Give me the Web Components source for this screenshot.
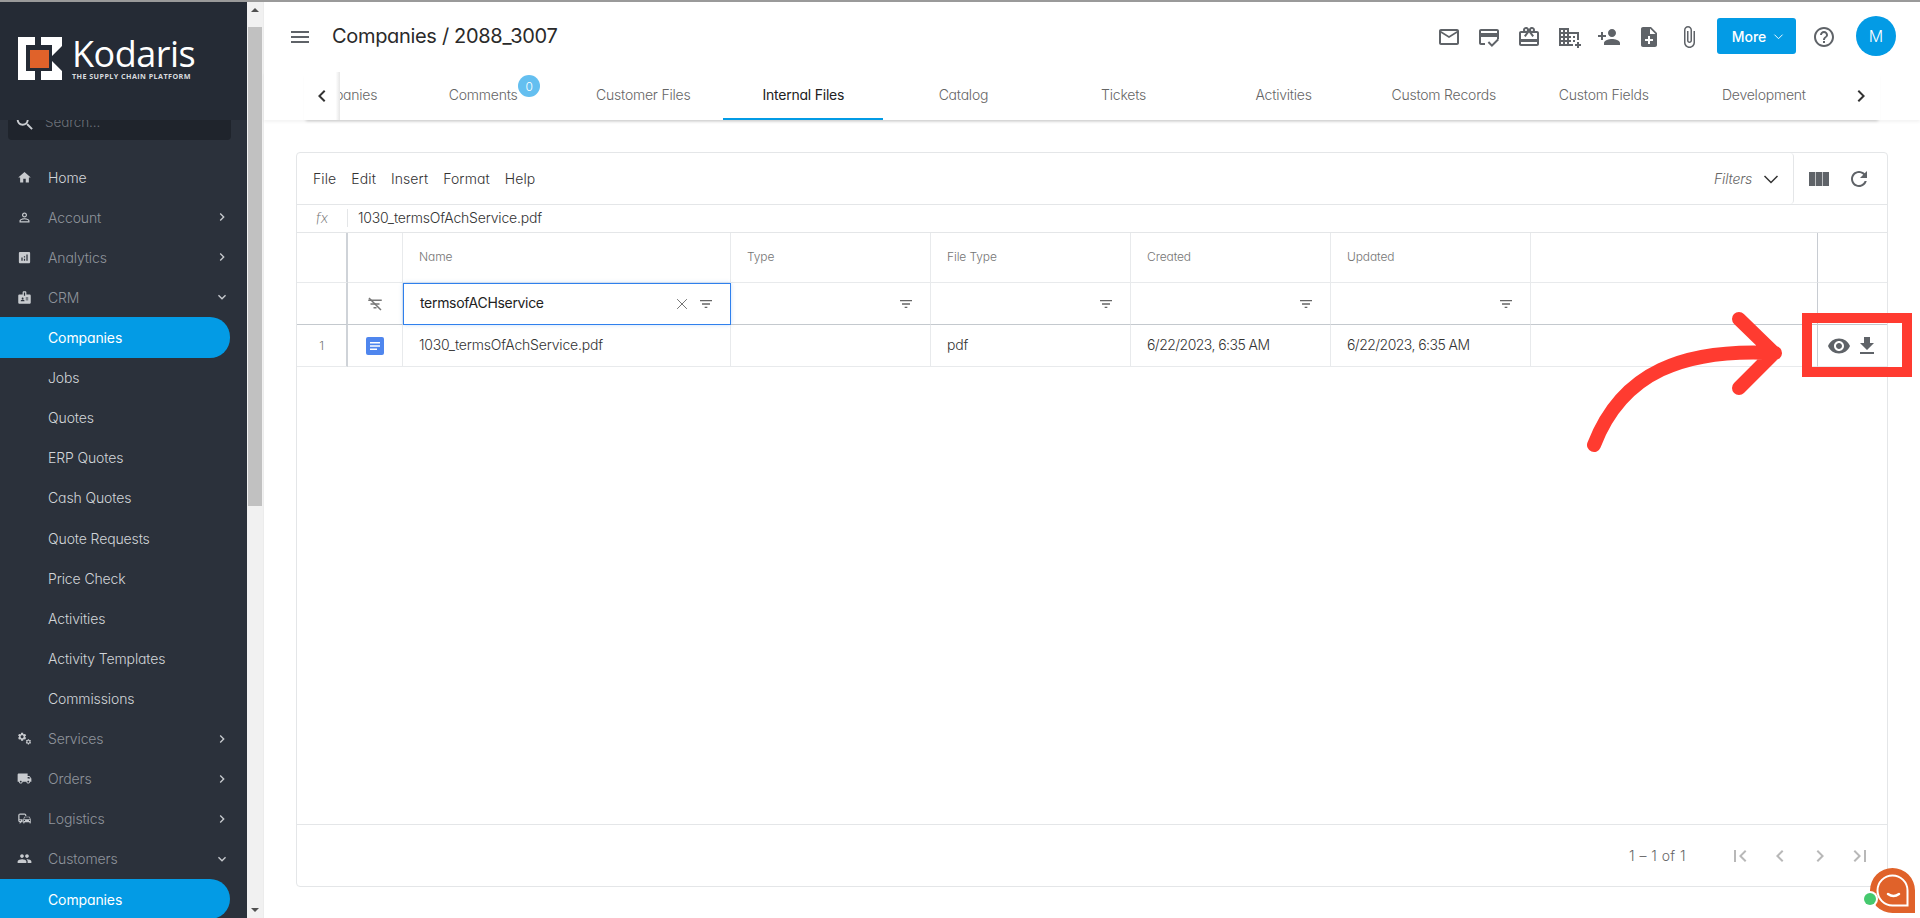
<!DOCTYPE html>
<html>
<head>
<meta charset="utf-8">
<title>Kodaris</title>
<style>
  html, body { margin: 0; height: 100%; overflow: hidden; }
  body { font-family: "Inter", "Lato", sans-serif; font-feature-settings: "cv11"; font-weight: 300; background: #fff; }
</style>
</head>
<body>
<kod-app>
  <kod-sidebar slot="sidebar">
    <kod-nav-item icon="home" bright>Home</kod-nav-item>
    <kod-nav-item icon="person" arrow="right">Account</kod-nav-item>
    <kod-nav-item icon="analytics" arrow="right">Analytics</kod-nav-item>
    <kod-nav-item icon="badge" arrow="down">CRM</kod-nav-item>
    <kod-nav-item active>Companies</kod-nav-item>
    <kod-nav-item child>Jobs</kod-nav-item>
    <kod-nav-item child>Quotes</kod-nav-item>
    <kod-nav-item child>ERP Quotes</kod-nav-item>
    <kod-nav-item child>Cash Quotes</kod-nav-item>
    <kod-nav-item child>Quote Requests</kod-nav-item>
    <kod-nav-item child>Price Check</kod-nav-item>
    <kod-nav-item child>Activities</kod-nav-item>
    <kod-nav-item child>Activity Templates</kod-nav-item>
    <kod-nav-item child>Commissions</kod-nav-item>
    <kod-nav-item icon="services" arrow="right">Services</kod-nav-item>
    <kod-nav-item icon="truck" arrow="right">Orders</kod-nav-item>
    <kod-nav-item icon="commute" arrow="right">Logistics</kod-nav-item>
    <kod-nav-item icon="people" arrow="down">Customers</kod-nav-item>
    <kod-nav-item active>Companies</kod-nav-item>
  </kod-sidebar>
  <kod-header slot="header"></kod-header>
  <kod-tabs slot="header"></kod-tabs>
  <kod-grid slot="content"></kod-grid>
</kod-app>
<kod-annotation></kod-annotation>
<kod-chat></kod-chat>

<script>
const ICONS = {
  menu: 'M3 18h18v-2H3v2zm0-5h18v-2H3v2zm0-7v2h18V6H3z',
  mail: 'M20 4H4c-1.1 0-1.99.9-1.99 2L2 18c0 1.1.9 2 2 2h16c1.1 0 2-.9 2-2V6c0-1.1-.9-2-2-2zm0 14H4V8l8 5 8-5v10zm-8-7L4 6h16l-8 5z',
  score: 'M20 4H4c-1.11 0-2 .89-2 2v12c0 1.11.89 2 2 2h4v-2H4v-6h16v2h2V6c0-1.1-.9-2-2-2zm0 4H4V6h16v2zm-5.07 11.17l-2.83-2.83-1.41 1.41L14.93 22 22 14.93l-1.41-1.41-5.66 5.65z',
  gift: 'M20 6h-2.18c.11-.31.18-.65.18-1 0-1.66-1.34-3-3-3-1.05 0-1.96.54-2.5 1.35l-.5.67-.5-.68C10.96 2.54 10.05 2 9 2 7.34 2 6 3.34 6 5c0 .35.07.69.18 1H4c-1.11 0-1.99.89-1.99 2L2 19c0 1.11.89 2 2 2h16c1.11 0 2-.89 2-2V8c0-1.11-.89-2-2-2zm-5-2c.55 0 1 .45 1 1s-.45 1-1 1-1-.45-1-1 .45-1 1-1zM9 4c.55 0 1 .45 1 1s-.45 1-1 1-1-.45-1-1 .45-1 1-1zm11 15H4v-2h16v2zm0-5H4V8h5.08L7 10.83 8.62 12 11 8.76l1-1.36 1 1.36L15.38 12 17 10.83 14.92 8H20v6z',
  domain: 'M12 7V3H2v18h14v-2h-4v-2h2v-2h-2v-2h2v-2h-2V9h8v6h2V7H12zM6 19H4v-2h2v2zm0-4H4v-2h2v2zm0-4H4V9h2v2zm0-4H4V5h2v2zm4 12H8v-2h2v2zm0-4H8v-2h2v2zm0-4H8V9h2v2zm0-4H8V5h2v2zm14 12v2h-2v2h-2v-2h-2v-2h2v-2h2v2h2zm-6-8h-2v2h2v-2zm0 4h-2v2h2v-2z',
  personadd: 'M15 12c2.21 0 4-1.79 4-4s-1.79-4-4-4-4 1.79-4 4 1.79 4 4 4zm-9-2V7H4v3H1v2h3v3h2v-3h3v-2H6zm9 4c-2.67 0-8 1.34-8 4v2h16v-2c0-2.66-5.33-4-8-4z',
  noteadd: 'M14 2H6c-1.1 0-1.99.9-1.99 2L4 20c0 1.1.89 2 1.99 2H18c1.1 0 2-.9 2-2V8l-6-6zm2 14h-3v3h-2v-3H8v-2h3v-3h2v3h3v2zm-3-7V3.5L18.5 9H13z',
  attach: 'M16.5 6v11.5c0 2.21-1.79 4-4 4s-4-1.79-4-4V5c0-1.38 1.12-2.5 2.5-2.5s2.5 1.12 2.5 2.5v10.5c0 .55-.45 1-1 1s-1-.45-1-1V6H10v9.5c0 1.38 1.12 2.5 2.5 2.5s2.5-1.12 2.5-2.5V5c0-2.21-1.79-4-4-4S7 2.79 7 5v12.5c0 3.04 2.46 5.5 5.5 5.5s5.5-2.46 5.5-5.5V6h-1.5z',
  help: 'M11 18h2v-2h-2v2zm1-16C6.48 2 2 6.48 2 12s4.48 10 10 10 10-4.48 10-10S17.52 2 12 2zm0 18c-4.41 0-8-3.59-8-8s3.59-8 8-8 8 3.59 8 8-3.59 8-8 8zm0-14c-2.21 0-4 1.79-4 4h2c0-1.1.9-2 2-2s2 .9 2 2c0 2-3 1.75-3 5h2c0-2.25 3-2.5 3-5 0-2.21-1.79-4-4-4z',
  columns: 'M2 5h6.3v14H2zM8.9 5h6.2v14H8.9zM15.7 5H22v14h-6.3z',
  refresh: 'M17.65 6.35C16.2 4.9 14.21 4 12 4c-4.42 0-7.99 3.58-7.99 8s3.57 8 7.99 8c3.73 0 6.84-2.55 7.73-6h-2.08c-.82 2.33-3.04 4-5.65 4-3.31 0-6-2.69-6-6s2.69-6 6-6c1.66 0 3.14.69 4.22 1.78L13 11h7V4l-2.35 2.35z',
  filter: 'M10 18h4v-2h-4v2zM3 6v2h18V6H3zm3 7h12v-2H6v2z',
  eye: 'M12 4.5C7 4.5 2.73 7.61 1 12c1.73 4.39 6 7.5 11 7.5s9.27-3.11 11-7.5c-1.73-4.39-6-7.5-11-7.5zM12 17c-2.76 0-5-2.24-5-5s2.24-5 5-5 5 2.24 5 5-2.24 5-5 5zm0-8c-1.66 0-3 1.34-3 3s1.34 3 3 3 3-1.34 3-3-1.34-3-3-3z',
  download: 'M19 9h-4V3H9v6H5l7 7 7-7zM5 18v2h14v-2H5z',
  first: 'M18.41 16.59L13.82 12l4.59-4.59L17 6l-6 6 6 6zM6 6h2v12H6z',
  left: 'M15.41 7.41L14 6l-6 6 6 6 1.41-1.41L10.83 12z',
  right: 'M10 6L8.59 7.41 13.17 12l-4.58 4.59L10 18l6-6z',
  last: 'M5.59 7.41L10.18 12l-4.59 4.59L7 18l6-6-6-6zM16 6h2v12h-2z',
  down: 'M16.59 8.59L12 13.17 7.41 8.59 6 10l6 6 6-6z',
  home: 'M10 20v-6h4v6h5v-8h3L12 3 2 12h3v8z',
  person: 'M12 5.9c1.16 0 2.1.94 2.1 2.1s-.94 2.1-2.1 2.1S9.9 9.16 9.9 8s.94-2.1 2.1-2.1m0 9c2.97 0 6.1 1.46 6.1 2.1v1.1H5.9V17c0-.64 3.13-2.1 6.1-2.1M12 4C9.79 4 8 5.79 8 8s1.79 4 4 4 4-1.79 4-4-1.79-4-4-4zm0 9c-2.67 0-8 1.34-8 4v3h16v-3c0-2.66-5.33-4-8-4z',
  analytics: 'M19 3H5c-1.1 0-2 .9-2 2v14c0 1.1.9 2 2 2h14c1.1 0 2-.9 2-2V5c0-1.1-.9-2-2-2zM9 17H7v-5h2v5zm4 0h-2v-3h2v3zm0-5h-2v-2h2v2zm4 5h-2V7h2v10z',
  badge: 'M20 7h-5V4c0-1.1-.9-2-2-2h-2c-1.1 0-2 .9-2 2v3H4c-1.1 0-2 .9-2 2v11c0 1.1.9 2 2 2h16c1.1 0 2-.9 2-2V9c0-1.1-.9-2-2-2zM9 12c.83 0 1.5.67 1.5 1.5S9.83 15 9 15s-1.5-.67-1.5-1.5S8.17 12 9 12zm3 6H6v-.75c0-1 2-1.5 3-1.5s3 .5 3 1.5V18zm1-9h-2V4h2v5zm5 7.5h-4V15h4v1.5zm0-3h-4V12h4v1.5z',
  truck: 'M20 8h-3V4H3c-1.1 0-2 .9-2 2v11h2c0 1.66 1.34 3 3 3s3-1.34 3-3h6c0 1.66 1.34 3 3 3s3-1.34 3-3h2v-5l-3-4zM6 18.5c-.83 0-1.5-.67-1.5-1.5s.67-1.5 1.5-1.5 1.5.67 1.5 1.5-.67 1.5-1.5 1.5zm13.5-9l1.96 2.5H17V9.5h2.5zm-1.5 9c-.83 0-1.5-.67-1.5-1.5s.67-1.5 1.5-1.5 1.5.67 1.5 1.5-.67 1.5-1.5 1.5z',
  commute: 'M12 4H5C3.34 4 2 5.34 2 7v8c0 1.66 1.34 3 3 3l-1 1v1h1l2-2.03L9 18v-5H4V5.98L13 6v2h2V7c0-1.66-1.34-3-3-3zM5 14c.55 0 1 .45 1 1s-.45 1-1 1-1-.45-1-1 .45-1 1-1zm15.57-4.34c-.14-.4-.52-.66-.97-.66h-7.19c-.46 0-.83.26-.98.66L10 13.77l.01 5.51c0 .38.31.72.69.72h.62c.38 0 .68-.38.68-.76V18h8v1.24c0 .38.31.76.69.76h.61c.38 0 .69-.34.69-.72l.01-1.37v-4.14l-1.43-4.11zm-8.16.34h7.19l1.03 3h-9.25l1.03-3zM12 16c-.55 0-1-.45-1-1s.45-1 1-1 1 .45 1 1-.45 1-1 1zm8 0c-.55 0-1-.45-1-1s.45-1 1-1 1 .45 1 1-.45 1-1 1z',
  people: 'M16 11c1.66 0 2.99-1.34 2.99-3S17.66 5 16 5c-1.66 0-3 1.34-3 3s1.34 3 3 3zm-8 0c1.66 0 2.99-1.34 2.99-3S9.66 5 8 5C6.34 5 5 6.34 5 8s1.34 3 3 3zm0 2c-2.33 0-7 1.17-7 3.5V19h14v-2.5c0-2.33-4.67-3.5-7-3.5zm8 0c-.29 0-.62.02-.97.05 1.16.84 1.97 1.97 1.97 3.45V19h6v-2.5c0-2.33-4.67-3.5-7-3.5z',
  search: 'M15.5 14h-.79l-.28-.27C15.41 12.59 16 11.11 16 9.5 16 5.91 13.09 3 9.5 3S3 5.91 3 9.5 5.91 16 9.5 16c1.61 0 3.09-.59 4.23-1.57l.27.28v.79l5 4.99L20.49 19l-4.99-5zm-6 0C7.01 14 5 11.99 5 9.5S7.01 5 9.5 5 14 7.01 14 9.5 11.99 14 9.5 14z'
};
const GEAR = 'M19.14 12.94c.04-.3.06-.61.06-.94 0-.32-.02-.64-.07-.94l2.03-1.58c.18-.14.23-.41.12-.61l-1.92-3.32c-.12-.22-.37-.29-.59-.22l-2.39.96c-.5-.38-1.03-.7-1.62-.94l-.36-2.54c-.04-.24-.24-.41-.48-.41h-3.84c-.24 0-.43.17-.47.41l-.36 2.54c-.59.24-1.13.57-1.62.94l-2.39-.96c-.22-.08-.47 0-.59.22L2.74 8.87c-.12.21-.08.47.12.61l2.03 1.58c-.05.3-.09.63-.09.94s.02.64.07.94l-2.03 1.58c-.18.14-.23.41-.12.61l1.92 3.32c.12.22.37.29.59.22l2.39-.96c.5.38 1.03.7 1.62.94l.36 2.54c.05.24.24.41.48.41h3.84c.24 0 .44-.17.47-.41l.36-2.54c.59-.24 1.13-.56 1.62-.94l2.39.96c.22.08.47 0 .59-.22l1.92-3.32c.12-.22.07-.47-.12-.61l-2.01-1.58zM12 15.6c-1.98 0-3.6-1.62-3.6-3.6s1.62-3.6 3.6-3.6 3.6 1.62 3.6 3.6-1.62 3.6-3.6 3.6z';

class KodIcon extends HTMLElement {
  connectedCallback() {
    const size = this.getAttribute('size') || 24;
    const name = this.getAttribute('name');
    let body = `<path d="${ICONS[name] || ''}"/>`;
    if (name === 'services') {
      body = `<g transform="translate(0 1) scale(.68)"><path d="${GEAR}"/></g><g transform="translate(13 12) scale(.44)"><path d="${GEAR}"/></g>`;
    }
    if (name === 'filteroff') {
      body = `<path d="${ICONS.filter}"/><path d="M4 4l16 16" stroke="currentColor" stroke-width="2"/>`;
    }
    if (name === 'clear') {
      body = `<path d="M5.5 5.5l13 13M18.5 5.5l-13 13" stroke="currentColor" stroke-width="1.2" fill="none"/>`;
    }
    if (name === 'chev') {
      body = `<path d="M5.5 9l6.5 6.5L18.5 9" stroke="currentColor" stroke-width="1.5" fill="none"/>`;
    }
    this.attachShadow({ mode: 'open' }).innerHTML = `
      <style>
        :host { display: inline-flex; flex: none; width: ${size}px; height: ${size}px; }
        svg { width: 100%; height: 100%; fill: currentColor; display: block; }
      </style>
      <svg viewBox="0 0 24 24">${body}</svg>`;
  }
}
customElements.define('kod-icon', KodIcon);

class KodApp extends HTMLElement {
  constructor() {
    super();
    this.attachShadow({ mode: 'open' }).innerHTML = `
      <style>
        :host { display: grid; grid-template-columns: 247px 17px 1fr; height: 918px; border-top: 2px solid #9a9a9a; box-sizing: border-box; overflow: hidden; }
        .scroll { background: #f1f1f1; display: flex; flex-direction: column; align-items: center; border-right: 1px solid #ececec; }
        .btn { height: 16px; flex: none; color: #505050; font-size: 0; display: flex; align-items: center; justify-content: center; }
        .up { width: 0; height: 0; border: 4px solid transparent; border-top: 0; border-bottom: 4px solid #505050; }
        .dn { width: 0; height: 0; border: 4px solid transparent; border-bottom: 0; border-top: 4px solid #505050; }
        .track { flex: 1; width: 100%; padding-top: 9px; }
        .thumb { height: 479px; background: #c1c1c1; margin: 0 1px; }
        main { display: flex; flex-direction: column; min-width: 0; }
        .content { padding: 32px 32px 0 32px; }
      </style>
      <slot name="sidebar"></slot>
      <div class="scroll">
        <div class="btn"><span class="up"></span></div>
        <div class="track"><div class="thumb"></div></div>
        <div class="btn"><span class="dn"></span></div>
      </div>
      <main>
        <slot name="header"></slot>
        <div class="content"><slot name="content"></slot></div>
      </main>`;
  }
}
customElements.define('kod-app', KodApp);

class KodSidebar extends HTMLElement {
  constructor() {
    super();
    this.attachShadow({ mode: 'open' }).innerHTML = `
      <style>
        :host { display: block; background: #2b313b; height: 916px; overflow: hidden; }
        .logo { height: 118px; background: #252b35; padding: 33px 0 0 18px; box-sizing: border-box; position: relative; z-index: 1; display: flex; gap: 10px; }
        .word { color: #fff; font-family: "Open Sans", sans-serif; font-feature-settings: normal; font-weight: 400; font-size: 36px; line-height: 37px; letter-spacing: -.5px; }
        .tag { color: #d8dbde; font-family: "Open Sans", sans-serif; font-feature-settings: normal; font-size: 7.2px; font-weight: 700; letter-spacing: .42px; line-height: 8px; white-space: nowrap; }
        .search { height: 30px; margin: -10px 16px 17px 8px; background: #1f242c; border-radius: 4px; display: flex; align-items: center; gap: 9px; padding: 0 0 7px 6px; box-sizing: border-box; color: #6d727a; font-size: 13.5px; letter-spacing: -.1px; }
        .search kod-icon { color: #c9ccd0; }
      </style>
      <div class="logo">
        <svg width="44" height="44" viewBox="0 0 44 44" style="margin-top:2px">
          <path fill="#fff" d="M0 0h17v8H8v26h9v9H0z"/>
          <path fill="#fff" d="M23 0h21v9L34 19V8H23zM23 43h21v-9L34 24v10H23z"/>
          <rect x="12" y="13" width="19" height="18" fill="#e0622a"/>
        </svg>
        <div>
          <div class="word">Kodaris</div>
          <div class="tag">THE SUPPLY CHAIN PLATFORM</div>
        </div>
      </div>
      <div class="search"><kod-icon name="search" size="22"></kod-icon><span>Search...</span></div>
      <slot></slot>`;
  }
}
customElements.define('kod-sidebar', KodSidebar);

class KodNavItem extends HTMLElement {
  connectedCallback() {
    const icon = this.getAttribute('icon');
    const arrow = this.getAttribute('arrow');
    this.attachShadow({ mode: 'open' }).innerHTML = `
      <style>
        :host { display: flex; align-items: center; height: 40.12px; padding-left: 17px; font-size: 14px; letter-spacing: -.12px; color: #8f949c; box-sizing: border-box; width: 230px; position: relative; }
        :host([bright]) { color: #d2d5d9; }
        :host([child]) { color: #d2d5d9; }
        :host([active]) { color: #fff; background: #039be5; border-radius: 0 20px 20px 0; font-weight: 400; }
        .ico { width: 15px; height: 15px; margin-right: 16px; color: #c8cbcf; flex: none; }
        .ico kod-icon { display: block; }
        .text { flex: 1; }
        :host([child]) .ico, :host([active]) .ico { visibility: hidden; }
        .arrow { color: #c8cbcf; margin-right: 0; display: flex; }
      </style>
      <span class="ico">${icon ? `<kod-icon name="${icon}" size="15"></kod-icon>` : ''}</span>
      <span class="text"><slot></slot></span>
      ${arrow ? `<span class="arrow"><kod-icon name="${arrow}" size="16"></kod-icon></span>` : ''}`;
  }
}
customElements.define('kod-nav-item', KodNavItem);

class KodHeader extends HTMLElement {
  constructor() {
    super();
    const iconNames = ['mail', 'score', 'gift', 'domain', 'personadd', 'noteadd', 'attach'];
    this.attachShadow({ mode: 'open' }).innerHTML = `
      <style>
        :host { display: flex; align-items: center; height: 70px; padding: 0 24px 0 24px; color: #5f6368; }
        h1 { font-size: 20px; font-weight: 400; letter-spacing: -.32px; color: #2a2a2a; margin: 0 0 2px 20px; flex: 1; }
        .tools { display: flex; gap: 16px; margin-right: 16px; }
        button { font: inherit; border: 0; background: #039be5; color: #fff; width: 79px; height: 36px; margin-bottom: 2px; border-radius: 3px; font-size: 14px; font-weight: 500; display: flex; align-items: center; justify-content: center; gap: 5px; padding: 0 0 0 5px; }
        .help { margin: 0 20px 0 16px; }
        .avatar { width: 40px; height: 40px; margin-bottom: 2px; border-radius: 50%; background: #039be5; color: #fff; display: flex; align-items: center; justify-content: center; font-size: 16px; }
      </style>
      <kod-icon name="menu" size="24"></kod-icon>
      <h1>Companies / 2088_3007</h1>
      <div class="tools">${iconNames.map(n => `<kod-icon name="${n}" size="24"></kod-icon>`).join('')}</div>
      <button>More <kod-icon name="chev" size="15"></kod-icon></button>
      <kod-icon class="help" name="help" size="24"></kod-icon>
      <div class="avatar">M</div>`;
  }
}
customElements.define('kod-header', KodHeader);

class KodTabs extends HTMLElement {
  constructor() {
    super();
    const tabs = ['Companies', 'Comments', 'Customer Files', 'Internal Files', 'Catalog', 'Tickets', 'Activities', 'Custom Records', 'Custom Fields', 'Development'];
    this.attachShadow({ mode: 'open' }).innerHTML = `
      <style>
        :host { display: block; height: 48px; padding: 0 40px; color: #666; box-shadow: 0 2px 3px rgba(0,0,0,.05); position: relative; font-size: 14px; letter-spacing: -.22px; background: #fff; }
        .wrap { display: flex; height: 100%; box-shadow: 0 3px 3px -2px rgba(0,0,0,.2); }
        .side { flex: none; display: flex; align-items: center; justify-content: center; color: #333; padding-bottom: 1px; box-sizing: border-box; }
        .side.l { width: 36px; background: linear-gradient(90deg, #fff 88%, #e6e6e6 100%); position: relative; z-index: 1; }
        .strip { flex: 1; overflow: hidden; display: flex; min-width: 0; }
        .side.r { width: 40px; padding-left: 2px; }
        .inner { display: flex; margin-left: -97px; flex: none; }
        .tab { width: 160.1px; flex: none; display: flex; align-items: center; justify-content: center; box-sizing: border-box; border-bottom: 2px solid transparent; padding-bottom: 2px; position: relative; }
        .tab.first { padding-left: 36px; }
        .tab.on { color: #222; border-bottom-color: #039be5; font-weight: 400; }
        .badge { position: absolute; top: 3px; left: 115px; width: 22px; height: 22px; border-radius: 50%; background: #64bff0; color: #fff; font-size: 12px; display: flex; align-items: center; justify-content: center; }
      </style>
      <div class="wrap">
        <div class="side l"><kod-icon name="left" size="24"></kod-icon></div>
        <div class="strip"><div class="inner">
          ${tabs.map((t, i) => `<div class="tab${t === 'Internal Files' ? ' on' : ''}${i === 0 ? ' first' : ''}">${t}${t === 'Comments' ? '<span class="badge">0</span>' : ''}</div>`).join('')}
        </div></div>
        <div class="side r"><kod-icon name="right" size="24"></kod-icon></div>
      </div>`;
  }
}
customElements.define('kod-tabs', KodTabs);

class KodGrid extends HTMLElement {
  constructor() {
    super();
    const cols = ['Name', 'Type', 'File Type', 'Created', 'Updated'];
    const filterCell = (extra) => `<div class="c f ${extra || ''}">${extra ? '<span class="val">termsofACHservice</span><kod-icon class="x" name="clear" size="18"></kod-icon>' : ''}<kod-icon class="fi" name="filter" size="16"></kod-icon></div>`;
    this.attachShadow({ mode: 'open' }).innerHTML = `
      <style>
        :host { display: flex; flex-direction: column; height: 735px; border: 1px solid #e4e6e8; border-radius: 4px; box-sizing: border-box; font-size: 14px; letter-spacing: -.2px; color: #333; }
        .bar { height: 52px; display: flex; align-items: center; border-bottom: 1px solid #e4e6e8; flex: none; box-sizing: border-box; }
        .menu { display: flex; gap: 15px; padding-left: 16px; flex: 1; letter-spacing: .1px; }
        .fbox { display: flex; align-items: center; height: 100%; padding-right: 10px; border-right: 1px solid #e4e6e8; border-radius: 0 4px 4px 0; color: #666; font-style: italic; gap: 7px; }
        .fbox kod-icon { color: #333; }
        .rt { display: flex; gap: 16px; padding: 0 16px 0 13px; color: #5f6368; align-items: center; }
        .fx { height: 28px; flex: none; display: flex; align-items: center; border-bottom: 1px solid #e4e6e8; box-sizing: border-box; padding-bottom: 1px; }
        .fx i { width: 50px; text-align: center; color: #777; box-sizing: border-box; font-family: "Lato", sans-serif; font-size: 16px; letter-spacing: 0; margin-bottom: 3px; }
        .fx span { border-left: 1px solid #e4e6e8; padding-left: 10px; line-height: 18px; }
        .table { display: grid; grid-template-columns: 51px 55px 328px 200px 200px 200px 200px 287px 1fr; grid-template-rows: 50px 42px 42px; flex: none; }
        .c { display: flex; align-items: center; padding-left: 16px; border-right: 1px solid #e8eaec; border-bottom: 1px solid #e8eaec; box-sizing: border-box; min-width: 0; padding-bottom: 2px; }
        .h { color: #757575; font-size: 12px; letter-spacing: -.1px; padding-bottom: 2px; }
        .date { letter-spacing: -.55px; }
        .n { justify-content: center; padding: 0; color: #777; font-size: 12px; border-right: 2px solid #cfd3d8; }
        .i { justify-content: center; padding: 0; color: #777; }
        .f { justify-content: flex-end; padding: 0 16px 0 0; border-bottom-color: #c4c9ce; color: #777; }
        .fn { border-bottom-color: #c4c9ce; }
        .name { border: 1px solid #2f80ed; padding-left: 16px; justify-content: flex-start; color: #222; box-shadow: 0 0 4px rgba(47,128,237,.25); }
        .val { flex: 1; font-weight: 400; letter-spacing: -.32px; margin-bottom: 3px; }
        .fi { color: #666; }
        .x { color: #666; margin-right: 7px; }
        .blankr { border-right: 1px solid #c8ccd2; }
        .act { border-right: 0; padding: 0 0 0 9px; gap: 4px; color: #5f6368; }
        .g { flex: 1; }
        .foot { height: 62px; flex: none; border-top: 1px solid #e4e6e8; display: flex; align-items: center; justify-content: flex-end; padding: 0 15px 0 0; color: #666; font-size: 14px; letter-spacing: .45px; box-sizing: border-box; }
        .foot span { margin-right: 42px; }
        .pg { display: flex; gap: 16px; color: #b8b8b8; }
      </style>
      <div class="bar">
        <div class="menu"><span>File</span><span>Edit</span><span>Insert</span><span>Format</span><span>Help</span></div>
        <div class="fbox">Filters <kod-icon name="chev" size="24"></kod-icon></div>
        <div class="rt"><kod-icon name="columns" size="24"></kod-icon><kod-icon name="refresh" size="24"></kod-icon></div>
      </div>
      <div class="fx"><i>fx</i><span>1030_termsOfAchService.pdf</span></div>
      <div class="table">
        <div class="c n"></div><div class="c i"></div>
        ${cols.map(c => `<div class="c h">${c}</div>`).join('')}
        <div class="c blankr"></div><div class="c" style="border-right:0"></div>

        <div class="c n fn"></div>
        <div class="c i fn"><kod-icon name="filteroff" size="18"></kod-icon></div>
        ${filterCell('name')}
        ${filterCell()}${filterCell()}${filterCell()}${filterCell()}
        <div class="c fn blankr"></div><div class="c fn" style="border-right:0"></div>

        <div class="c n">1</div>
        <div class="c i">
          <svg width="18" height="18" viewBox="0 0 18 18"><rect width="18" height="18" rx="2" fill="#4f86ee"/><path d="M4 5h10v1.6H4zM4 8.2h10v1.6H4zM4 11.4h7V13H4z" fill="#fff"/></svg>
        </div>
        <div class="c">1030_termsOfAchService.pdf</div>
        <div class="c"></div>
        <div class="c">pdf</div>
        <div class="c date">6/22/2023, 6:35 AM</div>
        <div class="c date">6/22/2023, 6:35 AM</div>
        <div class="c blankr"></div>
        <div class="c act"><kod-icon name="eye" size="24"></kod-icon><kod-icon name="download" size="24"></kod-icon></div>
      </div>
      <div class="g"></div>
      <div class="foot"><span>1 – 1 of 1</span>
        <div class="pg"><kod-icon name="first" size="24"></kod-icon><kod-icon name="left" size="24"></kod-icon><kod-icon name="right" size="24"></kod-icon><kod-icon name="last" size="24"></kod-icon></div>
      </div>`;
  }
}
customElements.define('kod-grid', KodGrid);

// red arrow and box drawn over the page
class KodAnnotation extends HTMLElement {
  constructor() {
    super();
    this.attachShadow({ mode: 'open' }).innerHTML = `
      <style>
        :host { position: absolute; left: 0; top: 0; width: 1920px; height: 918px; pointer-events: none; }
        svg { display: block; }
      </style>
      <svg width="1920" height="918" viewBox="0 0 1920 918">
        <rect x="1807" y="318" width="100" height="54" fill="none" stroke="#ff3b30" stroke-width="10"/>
        <path d="M1594 445C1622 372 1684 348 1775 353M1739 319l35 34-35 35" fill="none" stroke="#ff3b30" stroke-width="14" stroke-linecap="round" stroke-linejoin="round"/>
      </svg>`;
  }
}
customElements.define('kod-annotation', KodAnnotation);

class KodChat extends HTMLElement {
  constructor() {
    super();
    this.attachShadow({ mode: 'open' }).innerHTML = `
      <style>
        :host { position: absolute; left: 1862px; top: 866px; width: 58px; height: 52px; }
      </style>
      <svg width="58" height="52" viewBox="0 0 58 52">
        <path d="M30.5 2a22.5 22.5 0 0 0 0 45H53V24.5A22.5 22.5 0 0 0 30.5 2z" fill="#e0622a"/>
        <path d="M30.5 9.5a15 15 0 0 0 0 30H45.5V24.5A15 15 0 0 0 30.5 9.5z" fill="none" stroke="#fff" stroke-width="2"/>
        <path d="M26 28c3.5 2.5 7.5 2.5 11 0" fill="none" stroke="#fff" stroke-width="2.5" stroke-linecap="round"/>
        <circle cx="8" cy="33" r="8" fill="#fff"/>
        <circle cx="8" cy="33" r="6" fill="#45c96e"/>
      </svg>`;
  }
}
customElements.define('kod-chat', KodChat);
</script>
</body>
</html>
